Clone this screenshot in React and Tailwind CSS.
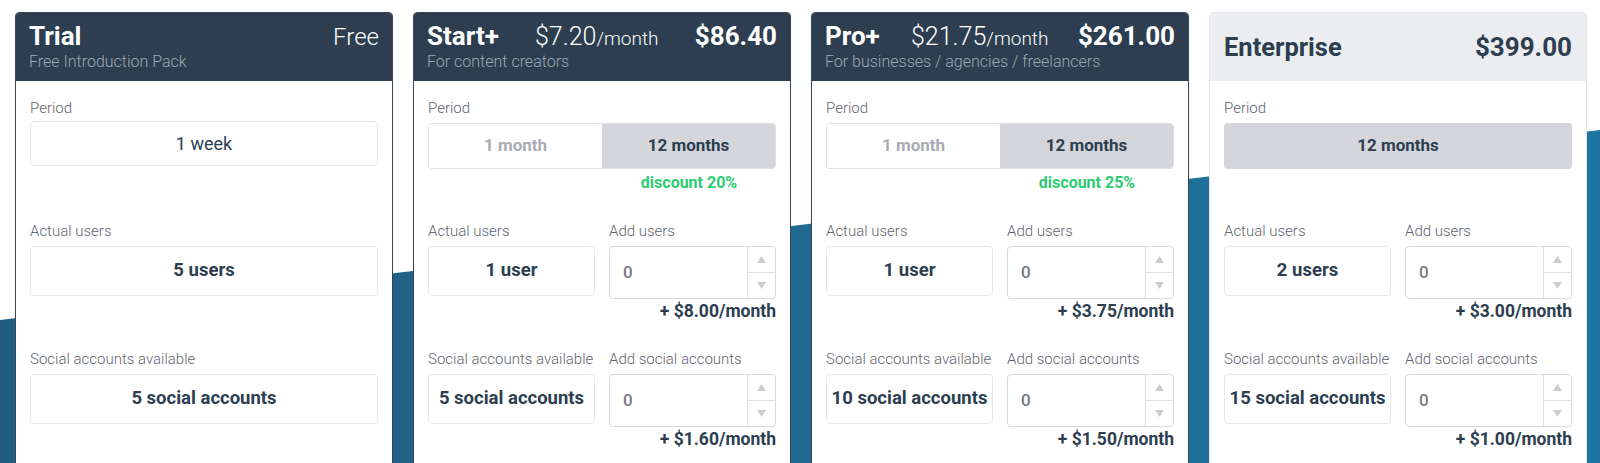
import React from 'react';

const plans = [
  {
    id: 'trial',
    title: 'Trial',
    subtitle: 'Free Introduction Pack',
    free: true,
    period: { single: '1 week' },
    users: '5 users',
    accounts: '5 social accounts',
  },
  {
    id: 'start',
    title: 'Start+',
    subtitle: 'For content creators',
    titleWidth: 'w-[108px]',
    monthly: '$7.20',
    total: '$86.40',
    period: { options: ['1 month', '12 months'], discount: 'discount 20%' },
    users: '1 user',
    userPrice: '+ $8.00/month',
    accounts: '5 social accounts',
    accountPrice: '+ $1.60/month',
  },
  {
    id: 'pro',
    title: 'Pro+',
    subtitle: 'For businesses / agencies / freelancers',
    titleWidth: 'w-[86px]',
    monthly: '$21.75',
    total: '$261.00',
    period: { options: ['1 month', '12 months'], discount: 'discount 25%' },
    users: '1 user',
    userPrice: '+ $3.75/month',
    accounts: '10 social accounts',
    accountPrice: '+ $1.50/month',
  },
  {
    id: 'enterprise',
    title: 'Enterprise',
    light: true,
    total: '$399.00',
    period: { fixed: '12 months' },
    users: '2 users',
    userPrice: '+ $3.00/month',
    accounts: '15 social accounts',
    accountPrice: '+ $1.00/month',
  },
];

function Label({ children }) {
  return <div className="h-5 text-[15px] leading-5 font-light text-[#5f6670] whitespace-nowrap">{children}</div>;
}

function ValueBox({ children }) {
  return (
    <div className="mt-[5px] h-[50px] flex items-center justify-center rounded-[4px] border border-[#e6e8eb] bg-white text-[18.5px] font-bold text-[#2c3e50] whitespace-nowrap">
      {children}
    </div>
  );
}

function NumberInput() {
  return (
    <div className="mt-[5px] h-[53px] flex rounded-[4px] border border-[#d6d9dd] bg-white">
      <div className="flex-1 flex items-center pl-[13px] text-[17px] font-medium text-[#777b80]">0</div>
      <div className="w-[28px] flex flex-col border-l border-[#dcdfe3]">
        <div className="flex-1 flex items-center justify-center">
          <svg width="9" height="7" viewBox="0 0 9 7"><polygon points="4.5,0 9,7 0,7" fill="#c9ccd1" /></svg>
        </div>
        <div className="flex-1 flex items-center justify-center border-t border-[#dcdfe3]">
          <svg width="9" height="7" viewBox="0 0 9 7"><polygon points="0,0 9,0 4.5,7" fill="#c9ccd1" /></svg>
        </div>
      </div>
    </div>
  );
}

function Header({ plan }) {
  if (plan.light) {
    return (
      <div className="h-[68px] px-[14px] flex items-center justify-between bg-[#ebedf0] rounded-t-[4px] text-[#2c3e50]">
        <span className="text-[25.5px] font-bold">{plan.title}</span>
        <span className="text-[26px] font-bold">{plan.total}</span>
      </div>
    );
  }
  return (
    <div className="h-[68px] px-[13px] pt-[8px] bg-[#2c3e50] rounded-t-[3px] text-white">
      <div className="flex items-baseline h-[30px] leading-[30px] whitespace-nowrap">
        <span className={`text-[26px] font-bold ${plan.titleWidth || ''}`}>{plan.title}</span>
        {plan.monthly && (
          <span className="font-light">
            <span className="text-[25px]">{plan.monthly}</span>
            <span className="text-[19px]">/month</span>
          </span>
        )}
        {plan.free ? (
          <span className="ml-auto text-[24px] font-light">Free</span>
        ) : (
          <span className="ml-auto text-[26px] font-bold">{plan.total}</span>
        )}
      </div>
      <div className="mt-[1px] text-[16px] leading-[19px] font-light text-[#9ea8b3] whitespace-nowrap">{plan.subtitle}</div>
    </div>
  );
}

function Period({ period }) {
  return (
    <div className="h-[123px]">
      <Label>Period</Label>
      {period.single && (
        <div className="mt-[3px] h-[45px] flex items-center justify-center rounded-[4px] border border-[#e6e8eb] text-[18px] text-[#2c3e50]">
          {period.single}
        </div>
      )}
      {period.fixed && (
        <div className="mt-[5px] h-[46px] flex items-center justify-center rounded-[4px] bg-[#d4d6db] text-[17px] font-bold text-[#2c3e50]">
          {period.fixed}
        </div>
      )}
      {period.options && (
        <>
          <div className="mt-[5px] h-[46px] grid grid-cols-2 rounded-[4px] border border-[#dcdfe3] overflow-hidden text-[17px] font-bold">
            <div className="flex items-center justify-center bg-white text-[#a9adb3]">{period.options[0]}</div>
            <div className="flex items-center justify-center bg-[#d4d6db] text-[#2c3e50]">{period.options[1]}</div>
          </div>
          <div className="grid grid-cols-2 mt-[4px]">
            <div />
            <div className="text-center text-[16px] leading-5 font-bold text-[#2ecc71]">{period.discount}</div>
          </div>
        </>
      )}
    </div>
  );
}

function Section({ label, value, addLabel, price, height }) {
  if (!addLabel) {
    return (
      <div className={height}>
        <Label>{label}</Label>
        <ValueBox>{value}</ValueBox>
      </div>
    );
  }
  return (
    <div className={`${height} grid grid-cols-2 gap-x-[14px]`}>
      <div>
        <Label>{label}</Label>
        <ValueBox>{value}</ValueBox>
      </div>
      <div>
        <Label>{addLabel}</Label>
        <NumberInput />
        <div className="text-right text-[17.5px] leading-6 font-bold text-[#2c3e50] whitespace-nowrap">{price}</div>
      </div>
    </div>
  );
}

function PlanCard({ plan }) {
  const border = plan.light ? 'border-[#e3e5e8]' : 'border-[#34475a]';
  return (
    <div className={`w-[378px] shrink-0 border rounded-t-[4px] bg-white ${border}`}>
      <Header plan={plan} />
      <div className="px-[14px] pt-[17px] h-[420px]">
        <Period period={plan.period} />
        <Section
          height="h-[128px]"
          label="Actual users"
          value={plan.users}
          addLabel={plan.userPrice ? 'Add users' : null}
          price={plan.userPrice}
        />
        <Section
          height="h-[126px]"
          label="Social accounts available"
          value={plan.accounts}
          addLabel={plan.accountPrice ? 'Add social accounts' : null}
          price={plan.accountPrice}
        />
      </div>
    </div>
  );
}

export default function App() {
  return (
    <div className="relative h-[463px] w-[1600px] overflow-hidden bg-white" style={{ fontFamily: 'Roboto, "Liberation Sans", sans-serif' }}>
      {/* background wave */}
      <svg className="absolute inset-0" width="1600" height="463" viewBox="0 0 1600 463">
        <defs>
          <linearGradient id="wave" x1="0" y1="0" x2="1" y2="0">
            <stop offset="0" stopColor="#225d80" />
            <stop offset="1" stopColor="#1e76a0" />
          </linearGradient>
        </defs>
        <polygon points="0,320 1600,130 1600,463 0,463" fill="url(#wave)" />
      </svg>
      <div className="relative flex gap-5 pl-[15px] pt-3">
        {plans.map((plan) => (
          <PlanCard key={plan.id} plan={plan} />
        ))}
      </div>
    </div>
  );
}
